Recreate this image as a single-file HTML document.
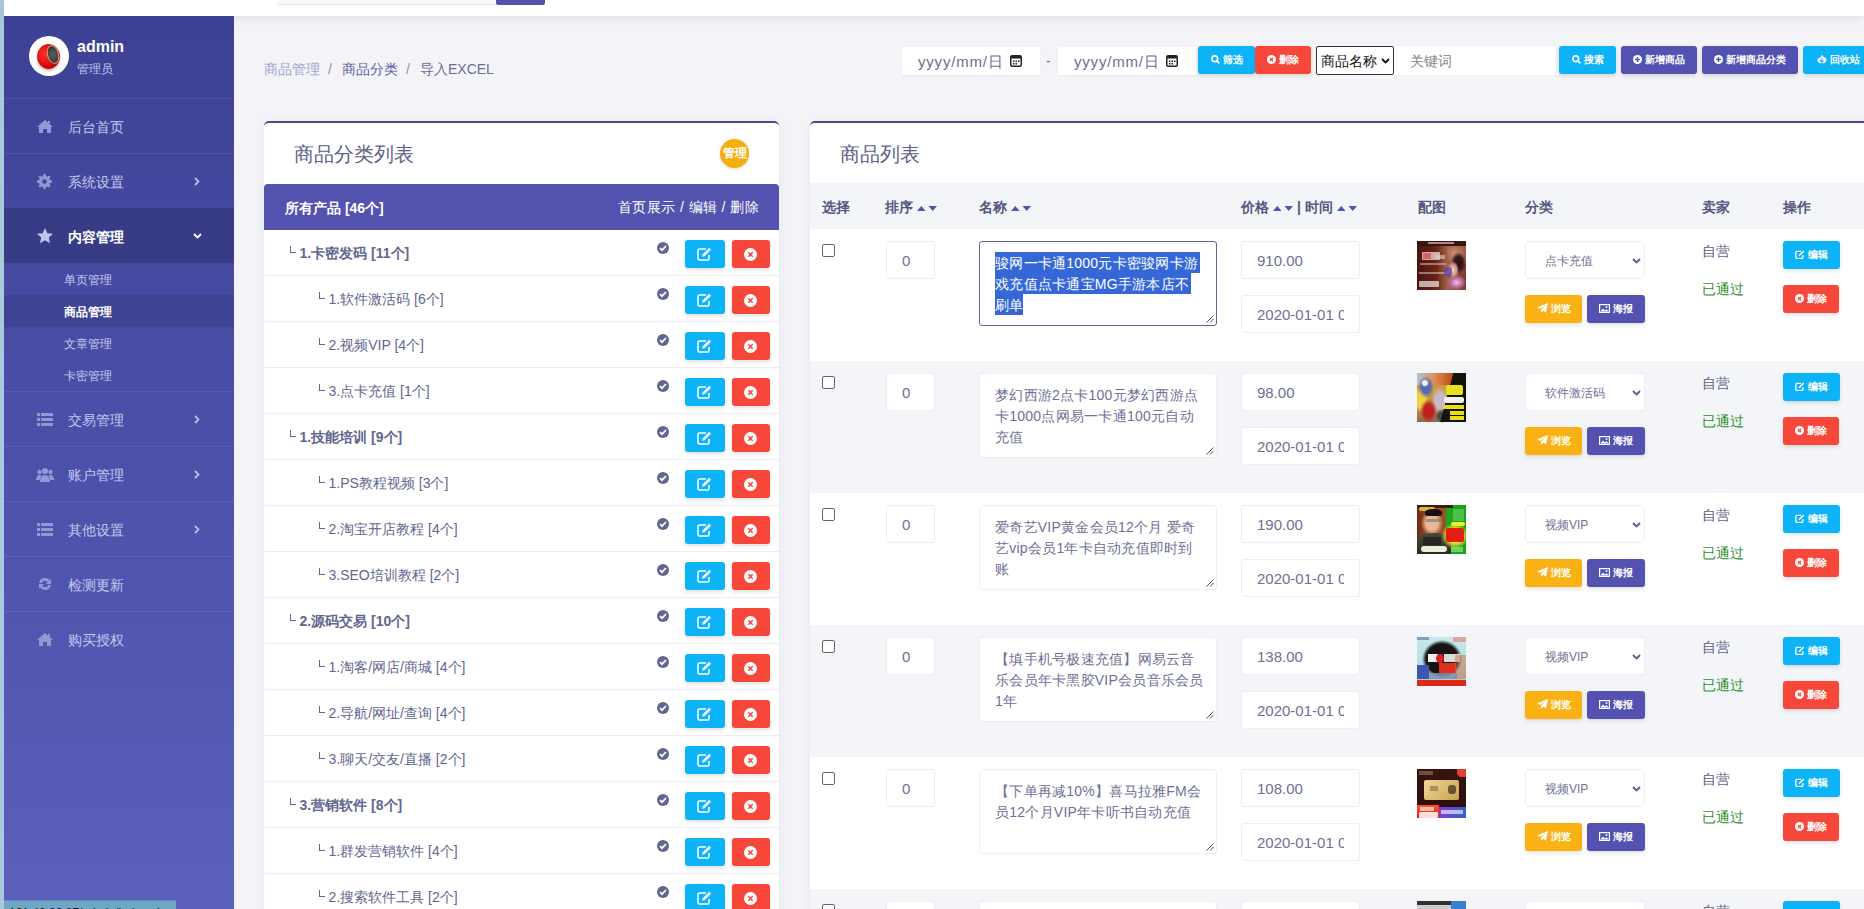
<!DOCTYPE html><html><head><meta charset="utf-8"><style>
*{box-sizing:border-box;margin:0;padding:0}
html,body{width:1864px;height:909px;overflow:hidden}
body{font-family:"Liberation Sans",sans-serif;background:#f4f4f8;position:relative;color:#6b6f96}
.a{position:absolute}
#strip{left:0;top:0;width:4px;height:909px;background:#a9c9dc}
#topbar{left:4px;top:0;width:1860px;height:16px;background:#fff;box-shadow:0 3px 8px rgba(80,80,170,.12)}
#side{left:4px;top:16px;width:230px;height:893px;background:linear-gradient(180deg,#3d4195 0%,#5b60bd 100%)}
.mi{position:absolute;left:0;width:230px;height:55px;border-top:1px solid rgba(255,255,255,.08)}
.mi .t{position:absolute;left:64px;top:1px;line-height:54px;font-size:14px;color:#c5c8ee}
.mi svg{position:absolute}
.sub{position:absolute;left:0;width:230px;height:32px}
.sub .t{position:absolute;left:60px;top:1px;line-height:32px;font-size:12px;color:#c8cbf0}
.crumb{top:60px;font-size:14px;line-height:18px}
.din{top:47px;height:28px;background:#fff;border-radius:2px;box-shadow:0 1px 2px rgba(0,0,0,.04)}
.din .t{position:absolute;left:16px;top:1px;line-height:28px;font-size:15px;color:#6b6f96;letter-spacing:.8px}
.btn{position:absolute;height:28px;border-radius:3px;color:#fff;font-size:10px;font-weight:bold;line-height:28px;text-align:center;white-space:nowrap;box-shadow:0 2px 4px rgba(0,0,0,.12)}
.cy{background:#0db3f7}
.rd{background:#f7463a}
.pu{background:#5352b0}
.or{background:#fab114}
.panel{background:#fff;border-top:2px solid #4a4a8c;border-radius:5px 5px 0 0;box-shadow:0 0 12px rgba(80,80,160,.08)}
.ptitle{position:absolute;font-size:20px;color:#5e6288;line-height:24px}
.crow{position:absolute;left:0;width:515px;height:46px;border-bottom:1px solid #ececf3}
.crow .n{position:absolute;top:0;line-height:46px;font-size:14px;color:#62668f;white-space:nowrap}
.crow .n b{font-weight:bold}
.crow .l{display:inline-block;width:6px;height:7px;border-left:1.7px solid #62668f;border-bottom:1.7px solid #62668f;position:relative;top:-5.5px;margin-left:1.5px;margin-right:4px}
.crow .ck{position:absolute;left:393px;top:12px;width:12px;height:12px}
.crow .eb{position:absolute;left:421px;top:10px;width:40px;height:28px;border-radius:3px;background:#0db3f7;box-shadow:0 2px 4px rgba(0,0,0,.12)}
.crow .xb{position:absolute;left:468px;top:10px;width:38px;height:28px;border-radius:3px;background:#f7463a;box-shadow:0 2px 4px rgba(0,0,0,.12)}
.hd{position:absolute;top:1px;line-height:46px;font-size:14px;font-weight:bold;color:#55597f;white-space:nowrap}
.prow{position:absolute;left:0;width:1054px;height:132px}
.inp{position:absolute;background:#fff;border:1px solid #ededf3;border-radius:3px;font-size:15px;color:#6e7195;padding-left:15px;overflow:hidden;white-space:nowrap}
.img1{background:linear-gradient(90deg,#4a1a12 0%,#7a3222 45%,#a05a40 70%,#6a2a20 100%);overflow:hidden}
.img2,.img3,.img4,.img5,.img6{overflow:hidden}
.ta{position:absolute;background:#fff;border:1px solid #ededf3;border-radius:3px;font-size:14px;line-height:21px;color:#6e7195;padding:11px 0 0 15px;white-space:nowrap;overflow:hidden;letter-spacing:.25px}
</style></head><body>
<div id="strip" class="a"></div>
<div id="topbar" class="a"></div>
<div class="a" style="left:278px;top:0;width:218px;height:5px;background:#f7f6fb;border-bottom:1px solid #ebebf2;box-shadow:0 1px 2px rgba(0,0,0,.04)"></div>
<div class="a" style="left:496px;top:0;width:49px;height:5px;background:#5352ae;border-radius:0 0 2px 2px"></div>
<div id="side" class="a">
<div class="a" style="left:25px;top:20px;width:40px;height:40px;border-radius:50%;background:#fff;overflow:hidden"><div class="a" style="left:8px;top:8px;width:23px;height:25px;border-radius:50%;background:radial-gradient(circle at 35% 40%,#ff3030,#c00 70%,#700);box-shadow:0 2px 2px rgba(0,0,0,.25)"></div><div class="a" style="left:18px;top:9px;width:12px;height:19px;border-radius:50%;background:radial-gradient(circle at 50% 50%,#5a605a,#2a2e2a);border:1px solid #c9a08a;transform:rotate(-15deg)"></div></div>
<div class="a" style="left:73px;top:22px;font-size:16px;font-weight:bold;color:#fff;line-height:18px">admin</div>
<div class="a" style="left:73px;top:45px;font-size:12px;color:#c0c4ee;line-height:16px">管理员</div>
<div class="mi" style="top:82px;"><svg style="left:33px;top:21px" width="16" height="13" viewBox="0 0 16 13"><path d="M8 0 L16 7 L14 7 L14 13 L10 13 L10 9 L6 9 L6 13 L2 13 L2 7 L0 7 Z M11 1 L13 1 L13 4 L11 2.5Z" fill="#9498d2"/></svg><div class="t" style="">后台首页</div></div>
<div class="mi" style="top:137px;"><svg style="left:33px;top:20px" width="15" height="15" viewBox="0 0 16 16"><path fill="#9498d2" d="M6.8 0h2.4l.4 2.2 1.3.6 1.9-1.3 1.7 1.7-1.3 1.9.6 1.3 2.2.4v2.4l-2.2.4-.6 1.3 1.3 1.9-1.7 1.7-1.9-1.3-1.3.6-.4 2.2H6.8l-.4-2.2-1.3-.6-1.9 1.3-1.7-1.7 1.3-1.9-.6-1.3L0 9.2V6.8l2.2-.4.6-1.3-1.3-1.9 1.7-1.7 1.9 1.3 1.3-.6zM8 5.5A2.5 2.5 0 1 0 8 10.5 2.5 2.5 0 1 0 8 5.5z"/></svg><div class="t" style="">系统设置</div><svg style="left:190px;top:23px" width="6" height="9" viewBox="0 0 6 9"><path d="M1 1l3.5 3.5L1 8" stroke="#b9bdec" stroke-width="1.8" fill="none"/></svg></div>
<div class="mi" style="top:192px;background:#383b85;border-top-color:#383b85"><svg style="left:33px;top:19px" width="16" height="16" viewBox="0 0 16 16"><path fill="#c3c6ec" d="M8 0l2.4 5.2 5.6.6-4.2 3.8 1.2 5.6L8 12.3 3 15.2l1.2-5.6L0 5.8l5.6-.6z"/></svg><div class="t" style="color:#fff;font-weight:bold">内容管理</div><svg style="left:189px;top:24px" width="9" height="6" viewBox="0 0 9 6"><path d="M1 1l3.5 3.5L8 1" stroke="#fff" stroke-width="1.8" fill="none"/></svg></div>
<div class="sub" style="top:247px"><div class="t">单页管理</div></div>
<div class="sub" style="top:279px;background:#3f4393"><div class="t" style="color:#fff;font-weight:bold">商品管理</div></div>
<div class="sub" style="top:311px"><div class="t">文章管理</div></div>
<div class="sub" style="top:343px"><div class="t">卡密管理</div></div>
<div class="mi" style="top:375px;"><svg style="left:33px;top:21px" width="16" height="13" viewBox="0 0 16 13"><path fill="#9498d2" d="M0 0h3v3H0zM4 0h12v3H4zM0 5h3v3H0zM4 5h12v3H4zM0 10h3v3H0zM4 10h12v3H4z"/></svg><div class="t" style="">交易管理</div><svg style="left:190px;top:23px" width="6" height="9" viewBox="0 0 6 9"><path d="M1 1l3.5 3.5L1 8" stroke="#b9bdec" stroke-width="1.8" fill="none"/></svg></div>
<div class="mi" style="top:430px;"><svg style="left:32px;top:20px" width="18" height="15" viewBox="0 0 18 15"><circle cx="9" cy="4" r="3" fill="#9498d2"/><circle cx="3.5" cy="5" r="2.2" fill="#9498d2"/><circle cx="14.5" cy="5" r="2.2" fill="#9498d2"/><path fill="#9498d2" d="M4 15c0-4 2-7 5-7s5 3 5 7z M0 13c0-3 1.5-5 3.5-5 1 0 1.5.3 2 .8-1 1.4-1.5 3-1.5 4.2z M18 13c0-3-1.5-5-3.5-5-1 0-1.5.3-2 .8 1 1.4 1.5 3 1.5 4.2z"/></svg><div class="t" style="">账户管理</div><svg style="left:190px;top:23px" width="6" height="9" viewBox="0 0 6 9"><path d="M1 1l3.5 3.5L1 8" stroke="#b9bdec" stroke-width="1.8" fill="none"/></svg></div>
<div class="mi" style="top:485px;"><svg style="left:33px;top:21px" width="16" height="13" viewBox="0 0 16 13"><path fill="#9498d2" d="M0 0h3v3H0zM4 0h12v3H4zM0 5h3v3H0zM4 5h12v3H4zM0 10h3v3H0zM4 10h12v3H4z"/></svg><div class="t" style="">其他设置</div><svg style="left:190px;top:23px" width="6" height="9" viewBox="0 0 6 9"><path d="M1 1l3.5 3.5L1 8" stroke="#b9bdec" stroke-width="1.8" fill="none"/></svg></div>
<div class="mi" style="top:540px;"><svg style="left:34px;top:20px" width="14" height="14" viewBox="0 0 14 14"><path fill="#9498d2" d="M7 1a6 6 0 0 1 4.8 2.4L13 2v5H8l1.8-1.8A3.5 3.5 0 0 0 3.6 6H1.1A6 6 0 0 1 7 1zM1 7h5l-1.8 1.8A3.5 3.5 0 0 0 10.4 8h2.5A6 6 0 0 1 2.2 10.6L1 12z"/></svg><div class="t" style="">检测更新</div></div>
<div class="mi" style="top:595px;"><svg style="left:33px;top:21px" width="16" height="13" viewBox="0 0 16 13"><path d="M8 0 L16 7 L14 7 L14 13 L10 13 L10 9 L6 9 L6 13 L2 13 L2 7 L0 7 Z M11 1 L13 1 L13 4 L11 2.5Z" fill="#9498d2"/></svg><div class="t" style="">购买授权</div></div>
</div>
<div class="a" style="left:4px;top:900px;width:172px;height:9px;background:#6fa6c6;overflow:hidden;border-top:1px solid #5d8fb5"><div class="a" style="left:5px;top:5px;font-size:12px;color:#111;line-height:14px;white-space:nowrap">101.42.80.87/admin/index.php</div></div>
<div class="a crumb" style="left:264px;color:#9ea2cc">商品管理</div>
<div class="a crumb" style="left:328px;color:#8a8eb8">/</div>
<div class="a crumb" style="left:342px;color:#5b5ea6">商品分类</div>
<div class="a crumb" style="left:406px;color:#8a8eb8">/</div>
<div class="a crumb" style="left:420px;color:#6b6f96">导入EXCEL</div>
<div class="a din" style="left:902px;width:138px"><div class="t">yyyy/mm/日</div><svg class="a" style="left:108px;top:8px" width="12" height="12" viewBox="0 0 12 12"><rect x=".75" y=".75" width="10.5" height="10.5" rx="1.5" fill="none" stroke="#222" stroke-width="1.5"/><rect x="1" y="1" width="10" height="2.5" fill="#222"/><rect x="3" y="5.5" width="1.5" height="1.5" fill="#222"/><rect x="5.5" y="5.5" width="1.5" height="1.5" fill="#222"/><rect x="8" y="5.5" width="1.5" height="1.5" fill="#222"/><rect x="3" y="8" width="1.5" height="1.5" fill="#222"/><rect x="5.5" y="8" width="1.5" height="1.5" fill="#222"/></svg></div>
<div class="a" style="left:1046px;top:52px;font-size:14px;line-height:18px;color:#6b6f96">-</div>
<div class="a din" style="left:1058px;width:138px"><div class="t">yyyy/mm/日</div><svg class="a" style="left:108px;top:8px" width="12" height="12" viewBox="0 0 12 12"><rect x=".75" y=".75" width="10.5" height="10.5" rx="1.5" fill="none" stroke="#222" stroke-width="1.5"/><rect x="1" y="1" width="10" height="2.5" fill="#222"/><rect x="3" y="5.5" width="1.5" height="1.5" fill="#222"/><rect x="5.5" y="5.5" width="1.5" height="1.5" fill="#222"/><rect x="8" y="5.5" width="1.5" height="1.5" fill="#222"/><rect x="3" y="8" width="1.5" height="1.5" fill="#222"/><rect x="5.5" y="8" width="1.5" height="1.5" fill="#222"/></svg></div>
<div class="btn cy" style="left:1198px;top:46px;width:57px"><svg width="9" height="9" viewBox="0 0 10 10" style="vertical-align:-1px;margin-right:3px"><circle cx="4.2" cy="4.2" r="3.2" stroke="#fff" stroke-width="1.8" fill="none"/><path d="M6.5 6.5L9.3 9.3" stroke="#fff" stroke-width="2"/></svg>筛选</div>
<div class="btn rd" style="left:1255px;top:46px;width:56px"><svg width="9" height="9" viewBox="0 0 10 10" style="vertical-align:-1px;margin-right:3px"><circle cx="5" cy="5" r="5" fill="#fff"/><path d="M3.2 3.2l3.6 3.6M6.8 3.2l-3.6 3.6" stroke="#f5433b" stroke-width="1.5"/></svg>删除</div>
<div class="a" style="left:1316px;top:46px;width:78px;height:29px;background:#fff;border:1px solid #333;border-radius:2px;font-size:14px;color:#111;line-height:29px;padding-left:4px;white-space:nowrap">商品名称<svg class="a" style="left:64px;top:11px" width="9" height="6" viewBox="0 0 9 6"><path d="M1 1l3.5 3.5L8 1" stroke="#111" stroke-width="1.8" fill="none"/></svg></div>
<div class="a" style="left:1394px;top:46px;width:161px;height:29px;background:#fff;font-size:14px;color:#888;line-height:31px;padding-left:16px">关键词</div>
<div class="btn cy" style="left:1559px;top:46px;width:57px"><svg width="9" height="9" viewBox="0 0 10 10" style="vertical-align:-1px;margin-right:3px"><circle cx="4.2" cy="4.2" r="3.2" stroke="#fff" stroke-width="1.8" fill="none"/><path d="M6.5 6.5L9.3 9.3" stroke="#fff" stroke-width="2"/></svg>搜索</div>
<div class="btn pu" style="left:1621px;top:46px;width:76px"><svg width="9" height="9" viewBox="0 0 10 10" style="vertical-align:-1px;margin-right:3px"><circle cx="5" cy="5" r="5" fill="#fff"/><path d="M5 2.3v5.4M2.3 5h5.4" stroke="#5352b0" stroke-width="1.6"/></svg>新增商品</div>
<div class="btn pu" style="left:1702px;top:46px;width:96px"><svg width="9" height="9" viewBox="0 0 10 10" style="vertical-align:-1px;margin-right:3px"><circle cx="5" cy="5" r="5" fill="#fff"/><path d="M5 2.3v5.4M2.3 5h5.4" stroke="#5352b0" stroke-width="1.6"/></svg>新增商品分类</div>
<div class="btn cy" style="left:1803px;top:46px;width:70px;border-radius:3px 0 0 3px"><svg width="10" height="10" viewBox="0 0 10 10" style="vertical-align:-1px;margin-right:3px"><path d="M5 .5L7 3.8 8.2 3.1 9.6 6.6 7.4 9.3H5.6V7.6H7.2L6.3 6 5.2 6.7 5.8 3.9 3.9 4.9Z M3.3 2.3L4.4 1 2.2 4.7 1 4.1.4 7.2 2.4 9.3H4.6V7.6H2.6L3.6 5.6 4.7 6.3Z" fill="#fff"/></svg>回收站</div>
<div class="a panel" style="left:264px;top:121px;width:515px;height:800px;overflow:hidden">
<div class="ptitle" style="left:30px;top:19px">商品分类列表</div>
<div class="a" style="left:456px;top:16px;width:29px;height:29px;border-radius:50%;background:#f8ad0e;color:#fff;font-size:12px;font-weight:bold;line-height:29px;text-align:center;box-shadow:0 1px 3px rgba(0,0,0,.15)">管理</div>
<div class="a" style="left:0;top:61px;width:515px;height:46px;background:#5352ae;border-radius:4px 4px 0 0"><div class="hd" style="left:21px;color:#fff">所有产品 [46个]</div><div class="a" style="right:20px;top:0;line-height:46px;font-size:14px;color:#fff;white-space:nowrap;letter-spacing:.4px">首页展示 / 编辑 / 删除</div></div>
<div class="crow" style="top:107px"><div class="n" style="left:24px"><span class="l"></span><b>1.卡密发码 [11个]</b></div><svg class="ck" viewBox="0 0 12 12"><circle cx="6" cy="6" r="6" fill="#62668f"/><path d="M3 6.2l2 2 4-4.2" stroke="#fff" stroke-width="1.8" fill="none"/></svg><div class="eb"><svg class="a" style="left:12px;top:7px" width="15" height="14" viewBox="0 0 15 14"><path d="M9 2H2.5A1.5 1.5 0 0 0 1 3.5v8A1.5 1.5 0 0 0 2.5 13h8a1.5 1.5 0 0 0 1.5-1.5V8" stroke="#fff" stroke-width="1.6" fill="none"/><path d="M12.2.8l1.9 1.9-6.4 6.4-2.6.7.7-2.6z" fill="#fff"/></svg></div><div class="xb"><svg class="a" style="left:12px;top:7.5px" width="13" height="13" viewBox="0 0 13 13"><circle cx="6.5" cy="6.5" r="6.5" fill="#fff"/><path d="M4.3 4.3l4.4 4.4M8.7 4.3l-4.4 4.4" stroke="#f5463a" stroke-width="1.6"/></svg></div></div>
<div class="crow" style="top:153px"><div class="n" style="left:53px"><span class="l"></span>1.软件激活码 [6个]</div><svg class="ck" viewBox="0 0 12 12"><circle cx="6" cy="6" r="6" fill="#62668f"/><path d="M3 6.2l2 2 4-4.2" stroke="#fff" stroke-width="1.8" fill="none"/></svg><div class="eb"><svg class="a" style="left:12px;top:7px" width="15" height="14" viewBox="0 0 15 14"><path d="M9 2H2.5A1.5 1.5 0 0 0 1 3.5v8A1.5 1.5 0 0 0 2.5 13h8a1.5 1.5 0 0 0 1.5-1.5V8" stroke="#fff" stroke-width="1.6" fill="none"/><path d="M12.2.8l1.9 1.9-6.4 6.4-2.6.7.7-2.6z" fill="#fff"/></svg></div><div class="xb"><svg class="a" style="left:12px;top:7.5px" width="13" height="13" viewBox="0 0 13 13"><circle cx="6.5" cy="6.5" r="6.5" fill="#fff"/><path d="M4.3 4.3l4.4 4.4M8.7 4.3l-4.4 4.4" stroke="#f5463a" stroke-width="1.6"/></svg></div></div>
<div class="crow" style="top:199px"><div class="n" style="left:53px"><span class="l"></span>2.视频VIP [4个]</div><svg class="ck" viewBox="0 0 12 12"><circle cx="6" cy="6" r="6" fill="#62668f"/><path d="M3 6.2l2 2 4-4.2" stroke="#fff" stroke-width="1.8" fill="none"/></svg><div class="eb"><svg class="a" style="left:12px;top:7px" width="15" height="14" viewBox="0 0 15 14"><path d="M9 2H2.5A1.5 1.5 0 0 0 1 3.5v8A1.5 1.5 0 0 0 2.5 13h8a1.5 1.5 0 0 0 1.5-1.5V8" stroke="#fff" stroke-width="1.6" fill="none"/><path d="M12.2.8l1.9 1.9-6.4 6.4-2.6.7.7-2.6z" fill="#fff"/></svg></div><div class="xb"><svg class="a" style="left:12px;top:7.5px" width="13" height="13" viewBox="0 0 13 13"><circle cx="6.5" cy="6.5" r="6.5" fill="#fff"/><path d="M4.3 4.3l4.4 4.4M8.7 4.3l-4.4 4.4" stroke="#f5463a" stroke-width="1.6"/></svg></div></div>
<div class="crow" style="top:245px"><div class="n" style="left:53px"><span class="l"></span>3.点卡充值 [1个]</div><svg class="ck" viewBox="0 0 12 12"><circle cx="6" cy="6" r="6" fill="#62668f"/><path d="M3 6.2l2 2 4-4.2" stroke="#fff" stroke-width="1.8" fill="none"/></svg><div class="eb"><svg class="a" style="left:12px;top:7px" width="15" height="14" viewBox="0 0 15 14"><path d="M9 2H2.5A1.5 1.5 0 0 0 1 3.5v8A1.5 1.5 0 0 0 2.5 13h8a1.5 1.5 0 0 0 1.5-1.5V8" stroke="#fff" stroke-width="1.6" fill="none"/><path d="M12.2.8l1.9 1.9-6.4 6.4-2.6.7.7-2.6z" fill="#fff"/></svg></div><div class="xb"><svg class="a" style="left:12px;top:7.5px" width="13" height="13" viewBox="0 0 13 13"><circle cx="6.5" cy="6.5" r="6.5" fill="#fff"/><path d="M4.3 4.3l4.4 4.4M8.7 4.3l-4.4 4.4" stroke="#f5463a" stroke-width="1.6"/></svg></div></div>
<div class="crow" style="top:291px"><div class="n" style="left:24px"><span class="l"></span><b>1.技能培训 [9个]</b></div><svg class="ck" viewBox="0 0 12 12"><circle cx="6" cy="6" r="6" fill="#62668f"/><path d="M3 6.2l2 2 4-4.2" stroke="#fff" stroke-width="1.8" fill="none"/></svg><div class="eb"><svg class="a" style="left:12px;top:7px" width="15" height="14" viewBox="0 0 15 14"><path d="M9 2H2.5A1.5 1.5 0 0 0 1 3.5v8A1.5 1.5 0 0 0 2.5 13h8a1.5 1.5 0 0 0 1.5-1.5V8" stroke="#fff" stroke-width="1.6" fill="none"/><path d="M12.2.8l1.9 1.9-6.4 6.4-2.6.7.7-2.6z" fill="#fff"/></svg></div><div class="xb"><svg class="a" style="left:12px;top:7.5px" width="13" height="13" viewBox="0 0 13 13"><circle cx="6.5" cy="6.5" r="6.5" fill="#fff"/><path d="M4.3 4.3l4.4 4.4M8.7 4.3l-4.4 4.4" stroke="#f5463a" stroke-width="1.6"/></svg></div></div>
<div class="crow" style="top:337px"><div class="n" style="left:53px"><span class="l"></span>1.PS教程视频 [3个]</div><svg class="ck" viewBox="0 0 12 12"><circle cx="6" cy="6" r="6" fill="#62668f"/><path d="M3 6.2l2 2 4-4.2" stroke="#fff" stroke-width="1.8" fill="none"/></svg><div class="eb"><svg class="a" style="left:12px;top:7px" width="15" height="14" viewBox="0 0 15 14"><path d="M9 2H2.5A1.5 1.5 0 0 0 1 3.5v8A1.5 1.5 0 0 0 2.5 13h8a1.5 1.5 0 0 0 1.5-1.5V8" stroke="#fff" stroke-width="1.6" fill="none"/><path d="M12.2.8l1.9 1.9-6.4 6.4-2.6.7.7-2.6z" fill="#fff"/></svg></div><div class="xb"><svg class="a" style="left:12px;top:7.5px" width="13" height="13" viewBox="0 0 13 13"><circle cx="6.5" cy="6.5" r="6.5" fill="#fff"/><path d="M4.3 4.3l4.4 4.4M8.7 4.3l-4.4 4.4" stroke="#f5463a" stroke-width="1.6"/></svg></div></div>
<div class="crow" style="top:383px"><div class="n" style="left:53px"><span class="l"></span>2.淘宝开店教程 [4个]</div><svg class="ck" viewBox="0 0 12 12"><circle cx="6" cy="6" r="6" fill="#62668f"/><path d="M3 6.2l2 2 4-4.2" stroke="#fff" stroke-width="1.8" fill="none"/></svg><div class="eb"><svg class="a" style="left:12px;top:7px" width="15" height="14" viewBox="0 0 15 14"><path d="M9 2H2.5A1.5 1.5 0 0 0 1 3.5v8A1.5 1.5 0 0 0 2.5 13h8a1.5 1.5 0 0 0 1.5-1.5V8" stroke="#fff" stroke-width="1.6" fill="none"/><path d="M12.2.8l1.9 1.9-6.4 6.4-2.6.7.7-2.6z" fill="#fff"/></svg></div><div class="xb"><svg class="a" style="left:12px;top:7.5px" width="13" height="13" viewBox="0 0 13 13"><circle cx="6.5" cy="6.5" r="6.5" fill="#fff"/><path d="M4.3 4.3l4.4 4.4M8.7 4.3l-4.4 4.4" stroke="#f5463a" stroke-width="1.6"/></svg></div></div>
<div class="crow" style="top:429px"><div class="n" style="left:53px"><span class="l"></span>3.SEO培训教程 [2个]</div><svg class="ck" viewBox="0 0 12 12"><circle cx="6" cy="6" r="6" fill="#62668f"/><path d="M3 6.2l2 2 4-4.2" stroke="#fff" stroke-width="1.8" fill="none"/></svg><div class="eb"><svg class="a" style="left:12px;top:7px" width="15" height="14" viewBox="0 0 15 14"><path d="M9 2H2.5A1.5 1.5 0 0 0 1 3.5v8A1.5 1.5 0 0 0 2.5 13h8a1.5 1.5 0 0 0 1.5-1.5V8" stroke="#fff" stroke-width="1.6" fill="none"/><path d="M12.2.8l1.9 1.9-6.4 6.4-2.6.7.7-2.6z" fill="#fff"/></svg></div><div class="xb"><svg class="a" style="left:12px;top:7.5px" width="13" height="13" viewBox="0 0 13 13"><circle cx="6.5" cy="6.5" r="6.5" fill="#fff"/><path d="M4.3 4.3l4.4 4.4M8.7 4.3l-4.4 4.4" stroke="#f5463a" stroke-width="1.6"/></svg></div></div>
<div class="crow" style="top:475px"><div class="n" style="left:24px"><span class="l"></span><b>2.源码交易 [10个]</b></div><svg class="ck" viewBox="0 0 12 12"><circle cx="6" cy="6" r="6" fill="#62668f"/><path d="M3 6.2l2 2 4-4.2" stroke="#fff" stroke-width="1.8" fill="none"/></svg><div class="eb"><svg class="a" style="left:12px;top:7px" width="15" height="14" viewBox="0 0 15 14"><path d="M9 2H2.5A1.5 1.5 0 0 0 1 3.5v8A1.5 1.5 0 0 0 2.5 13h8a1.5 1.5 0 0 0 1.5-1.5V8" stroke="#fff" stroke-width="1.6" fill="none"/><path d="M12.2.8l1.9 1.9-6.4 6.4-2.6.7.7-2.6z" fill="#fff"/></svg></div><div class="xb"><svg class="a" style="left:12px;top:7.5px" width="13" height="13" viewBox="0 0 13 13"><circle cx="6.5" cy="6.5" r="6.5" fill="#fff"/><path d="M4.3 4.3l4.4 4.4M8.7 4.3l-4.4 4.4" stroke="#f5463a" stroke-width="1.6"/></svg></div></div>
<div class="crow" style="top:521px"><div class="n" style="left:53px"><span class="l"></span>1.淘客/网店/商城 [4个]</div><svg class="ck" viewBox="0 0 12 12"><circle cx="6" cy="6" r="6" fill="#62668f"/><path d="M3 6.2l2 2 4-4.2" stroke="#fff" stroke-width="1.8" fill="none"/></svg><div class="eb"><svg class="a" style="left:12px;top:7px" width="15" height="14" viewBox="0 0 15 14"><path d="M9 2H2.5A1.5 1.5 0 0 0 1 3.5v8A1.5 1.5 0 0 0 2.5 13h8a1.5 1.5 0 0 0 1.5-1.5V8" stroke="#fff" stroke-width="1.6" fill="none"/><path d="M12.2.8l1.9 1.9-6.4 6.4-2.6.7.7-2.6z" fill="#fff"/></svg></div><div class="xb"><svg class="a" style="left:12px;top:7.5px" width="13" height="13" viewBox="0 0 13 13"><circle cx="6.5" cy="6.5" r="6.5" fill="#fff"/><path d="M4.3 4.3l4.4 4.4M8.7 4.3l-4.4 4.4" stroke="#f5463a" stroke-width="1.6"/></svg></div></div>
<div class="crow" style="top:567px"><div class="n" style="left:53px"><span class="l"></span>2.导航/网址/查询 [4个]</div><svg class="ck" viewBox="0 0 12 12"><circle cx="6" cy="6" r="6" fill="#62668f"/><path d="M3 6.2l2 2 4-4.2" stroke="#fff" stroke-width="1.8" fill="none"/></svg><div class="eb"><svg class="a" style="left:12px;top:7px" width="15" height="14" viewBox="0 0 15 14"><path d="M9 2H2.5A1.5 1.5 0 0 0 1 3.5v8A1.5 1.5 0 0 0 2.5 13h8a1.5 1.5 0 0 0 1.5-1.5V8" stroke="#fff" stroke-width="1.6" fill="none"/><path d="M12.2.8l1.9 1.9-6.4 6.4-2.6.7.7-2.6z" fill="#fff"/></svg></div><div class="xb"><svg class="a" style="left:12px;top:7.5px" width="13" height="13" viewBox="0 0 13 13"><circle cx="6.5" cy="6.5" r="6.5" fill="#fff"/><path d="M4.3 4.3l4.4 4.4M8.7 4.3l-4.4 4.4" stroke="#f5463a" stroke-width="1.6"/></svg></div></div>
<div class="crow" style="top:613px"><div class="n" style="left:53px"><span class="l"></span>3.聊天/交友/直播 [2个]</div><svg class="ck" viewBox="0 0 12 12"><circle cx="6" cy="6" r="6" fill="#62668f"/><path d="M3 6.2l2 2 4-4.2" stroke="#fff" stroke-width="1.8" fill="none"/></svg><div class="eb"><svg class="a" style="left:12px;top:7px" width="15" height="14" viewBox="0 0 15 14"><path d="M9 2H2.5A1.5 1.5 0 0 0 1 3.5v8A1.5 1.5 0 0 0 2.5 13h8a1.5 1.5 0 0 0 1.5-1.5V8" stroke="#fff" stroke-width="1.6" fill="none"/><path d="M12.2.8l1.9 1.9-6.4 6.4-2.6.7.7-2.6z" fill="#fff"/></svg></div><div class="xb"><svg class="a" style="left:12px;top:7.5px" width="13" height="13" viewBox="0 0 13 13"><circle cx="6.5" cy="6.5" r="6.5" fill="#fff"/><path d="M4.3 4.3l4.4 4.4M8.7 4.3l-4.4 4.4" stroke="#f5463a" stroke-width="1.6"/></svg></div></div>
<div class="crow" style="top:659px"><div class="n" style="left:24px"><span class="l"></span><b>3.营销软件 [8个]</b></div><svg class="ck" viewBox="0 0 12 12"><circle cx="6" cy="6" r="6" fill="#62668f"/><path d="M3 6.2l2 2 4-4.2" stroke="#fff" stroke-width="1.8" fill="none"/></svg><div class="eb"><svg class="a" style="left:12px;top:7px" width="15" height="14" viewBox="0 0 15 14"><path d="M9 2H2.5A1.5 1.5 0 0 0 1 3.5v8A1.5 1.5 0 0 0 2.5 13h8a1.5 1.5 0 0 0 1.5-1.5V8" stroke="#fff" stroke-width="1.6" fill="none"/><path d="M12.2.8l1.9 1.9-6.4 6.4-2.6.7.7-2.6z" fill="#fff"/></svg></div><div class="xb"><svg class="a" style="left:12px;top:7.5px" width="13" height="13" viewBox="0 0 13 13"><circle cx="6.5" cy="6.5" r="6.5" fill="#fff"/><path d="M4.3 4.3l4.4 4.4M8.7 4.3l-4.4 4.4" stroke="#f5463a" stroke-width="1.6"/></svg></div></div>
<div class="crow" style="top:705px"><div class="n" style="left:53px"><span class="l"></span>1.群发营销软件 [4个]</div><svg class="ck" viewBox="0 0 12 12"><circle cx="6" cy="6" r="6" fill="#62668f"/><path d="M3 6.2l2 2 4-4.2" stroke="#fff" stroke-width="1.8" fill="none"/></svg><div class="eb"><svg class="a" style="left:12px;top:7px" width="15" height="14" viewBox="0 0 15 14"><path d="M9 2H2.5A1.5 1.5 0 0 0 1 3.5v8A1.5 1.5 0 0 0 2.5 13h8a1.5 1.5 0 0 0 1.5-1.5V8" stroke="#fff" stroke-width="1.6" fill="none"/><path d="M12.2.8l1.9 1.9-6.4 6.4-2.6.7.7-2.6z" fill="#fff"/></svg></div><div class="xb"><svg class="a" style="left:12px;top:7.5px" width="13" height="13" viewBox="0 0 13 13"><circle cx="6.5" cy="6.5" r="6.5" fill="#fff"/><path d="M4.3 4.3l4.4 4.4M8.7 4.3l-4.4 4.4" stroke="#f5463a" stroke-width="1.6"/></svg></div></div>
<div class="crow" style="top:751px"><div class="n" style="left:53px"><span class="l"></span>2.搜索软件工具 [2个]</div><svg class="ck" viewBox="0 0 12 12"><circle cx="6" cy="6" r="6" fill="#62668f"/><path d="M3 6.2l2 2 4-4.2" stroke="#fff" stroke-width="1.8" fill="none"/></svg><div class="eb"><svg class="a" style="left:12px;top:7px" width="15" height="14" viewBox="0 0 15 14"><path d="M9 2H2.5A1.5 1.5 0 0 0 1 3.5v8A1.5 1.5 0 0 0 2.5 13h8a1.5 1.5 0 0 0 1.5-1.5V8" stroke="#fff" stroke-width="1.6" fill="none"/><path d="M12.2.8l1.9 1.9-6.4 6.4-2.6.7.7-2.6z" fill="#fff"/></svg></div><div class="xb"><svg class="a" style="left:12px;top:7.5px" width="13" height="13" viewBox="0 0 13 13"><circle cx="6.5" cy="6.5" r="6.5" fill="#fff"/><path d="M4.3 4.3l4.4 4.4M8.7 4.3l-4.4 4.4" stroke="#f5463a" stroke-width="1.6"/></svg></div></div>
<div class="crow" style="top:797px"><div class="n" style="left:53px"><span class="l"></span>3.其他 [2个]</div><svg class="ck" viewBox="0 0 12 12"><circle cx="6" cy="6" r="6" fill="#62668f"/><path d="M3 6.2l2 2 4-4.2" stroke="#fff" stroke-width="1.8" fill="none"/></svg><div class="eb"><svg class="a" style="left:12px;top:7px" width="15" height="14" viewBox="0 0 15 14"><path d="M9 2H2.5A1.5 1.5 0 0 0 1 3.5v8A1.5 1.5 0 0 0 2.5 13h8a1.5 1.5 0 0 0 1.5-1.5V8" stroke="#fff" stroke-width="1.6" fill="none"/><path d="M12.2.8l1.9 1.9-6.4 6.4-2.6.7.7-2.6z" fill="#fff"/></svg></div><div class="xb"><svg class="a" style="left:12px;top:7.5px" width="13" height="13" viewBox="0 0 13 13"><circle cx="6.5" cy="6.5" r="6.5" fill="#fff"/><path d="M4.3 4.3l4.4 4.4M8.7 4.3l-4.4 4.4" stroke="#f5463a" stroke-width="1.6"/></svg></div></div>
</div>
<div class="a panel" style="left:810px;top:121px;width:1070px;height:800px;overflow:hidden;border-radius:5px 0 0 0">
<div class="ptitle" style="left:30px;top:19px">商品列表</div>
<div class="a" style="left:0;top:60px;width:1070px;height:46px;background:#f4f5f9">
<div class="hd" style="left:12px">选择</div>
<div class="hd" style="left:75px">排序<svg width="20" height="5" viewBox="0 0 20 5" style="margin-left:4px;vertical-align:1px"><path d="M0 5L4.3 0 8.6 5z M11.5 0h8.5l-4.25 5z" fill="#5352ae"/></svg></div>
<div class="hd" style="left:169px">名称<svg width="20" height="5" viewBox="0 0 20 5" style="margin-left:4px;vertical-align:1px"><path d="M0 5L4.3 0 8.6 5z M11.5 0h8.5l-4.25 5z" fill="#5352ae"/></svg></div>
<div class="hd" style="left:431px">价格<svg width="20" height="5" viewBox="0 0 20 5" style="margin-left:4px;vertical-align:1px"><path d="M0 5L4.3 0 8.6 5z M11.5 0h8.5l-4.25 5z" fill="#5352ae"/></svg> | 时间<svg width="20" height="5" viewBox="0 0 20 5" style="margin-left:4px;vertical-align:1px"><path d="M0 5L4.3 0 8.6 5z M11.5 0h8.5l-4.25 5z" fill="#5352ae"/></svg></div>
<div class="hd" style="left:608px">配图</div>
<div class="hd" style="left:715px">分类</div>
<div class="hd" style="left:892px">卖家</div>
<div class="hd" style="left:973px">操作</div>
</div>
<div class="prow" style="top:106px;background:#fff">
<div class="a" style="left:12px;top:15px;width:13px;height:13px;border:1px solid #666;border-radius:2px;background:#fff"></div>
<div class="inp" style="left:76px;top:12px;width:49px;height:38px;line-height:38px">0</div>
<div class="ta" style="left:169px;top:12px;width:238px;height:85px;border-color:#62629a;color:#fff"><div class="a" style="left:15px;top:10px;width:205px;height:21px;background:#3568d6;"></div><div class="a" style="left:15px;top:31px;width:196px;height:21px;background:#3568d6;"></div><div class="a" style="left:15px;top:52px;width:28px;height:21px;background:#3568d6;"></div><div style="position:relative">骏网一卡通1000元卡密骏网卡游<br>戏充值点卡通宝MG手游本店不<br>刷单</div><svg class="a" style="right:2px;bottom:2px" width="9" height="9" viewBox="0 0 9 9"><path d="M8.5 1.5L1.5 8.5M8.5 5L5 8.5" stroke="#555" stroke-width="1"/></svg></div>
<div class="inp" style="left:431px;top:12px;width:119px;height:38px;line-height:38px">910.00</div>
<div class="inp" style="left:431px;top:66px;width:119px;height:38px;line-height:38px"><div class="a" style="left:15px;top:0;width:87px;overflow:hidden">2020-01-01 0</div></div>
<div class="a" style="left:607px;top:12px;width:50px;height:50px;overflow:hidden"><div class="a" style="left:0;top:0;width:50px;height:50px;filter:blur(.5px)"><div class="a" style="left:0px;top:0px;width:49px;height:49px;background:linear-gradient(90deg,#4a140e 0%,#6a2416 40%,#a0644a 62%,#7a3a2a 100%);"></div><div class="a" style="left:0px;top:0px;width:49px;height:5px;background:#3a1410;"></div><div class="a" style="left:11px;top:1px;width:26px;height:2px;background:#c8a8a0;opacity:.8"></div><div class="a" style="left:30px;top:5px;width:19px;height:18px;background:radial-gradient(ellipse at 40% 40%,#c89078,#9a5a40 70%);"></div><div class="a" style="left:5px;top:11px;width:18px;height:8px;background:#f0e0e0;opacity:.75;border-radius:1px"></div><div class="a" style="left:6px;top:12px;width:8px;height:6px;background:#e03030;opacity:.6"></div><div class="a" style="left:18px;top:14px;width:10px;height:4px;background:#e8d0c8;opacity:.6"></div><div class="a" style="left:3px;top:22px;width:26px;height:2px;background:#d8c0b8;opacity:.55"></div><div class="a" style="left:2px;top:31px;width:30px;height:2px;background:#f0e8e8;opacity:.45"></div><div class="a" style="left:34px;top:11px;width:15px;height:22px;background:radial-gradient(closest-side,#2a0e14,#3a1a20 60%,rgba(90,40,40,0) 100%);"></div><div class="a" style="left:30px;top:20px;width:12px;height:18px;background:radial-gradient(closest-side,#f0d0c8,#d0988a 60%,rgba(200,140,130,0) 100%);"></div><div class="a" style="left:27px;top:26px;width:8px;height:10px;background:#6a40a0;opacity:.75;border-radius:40%"></div><div class="a" style="left:30px;top:34px;width:19px;height:15px;background:radial-gradient(closest-side,#f0c0e0,#c070a8 55%,rgba(150,70,100,0) 100%);"></div><div class="a" style="left:2px;top:40px;width:20px;height:6px;background:#f0f0f0;opacity:.7;border-radius:1px"></div></div></div>
<div class="inp" style="left:715px;top:12px;width:120px;height:38px;line-height:39px;font-size:12px;padding-left:19px">点卡充值<svg class="a" style="left:106px;top:16px" width="9" height="6" viewBox="0 0 9 6"><path d="M1 1l3.5 3.5L8 1" stroke="#5a5e8c" stroke-width="1.8" fill="none"/></svg></div>
<div class="btn or" style="left:715px;top:66px;width:57px"><svg width="11" height="10" viewBox="0 0 11 10" style="vertical-align:-1px;margin-right:3px"><path d="M11 0L0 4.5l3 1.3L9 1.5 4 6.3V10l2-2.3 3 1.5z" fill="#fff"/></svg>浏览</div>
<div class="btn pu" style="left:777px;top:66px;width:58px"><svg width="11" height="9" viewBox="0 0 11 9" style="vertical-align:-1px;margin-right:3px"><rect x=".6" y=".6" width="9.8" height="7.8" stroke="#fff" stroke-width="1.2" fill="none"/><path d="M1.5 7.5l2.5-3 2 2 1.5-1.5 2 2.5z" fill="#fff"/><circle cx="7.5" cy="3" r="1" fill="#fff"/></svg>海报</div>
<div class="a" style="left:892px;top:12px;font-size:14px;line-height:20px;color:#5e6288">自营</div>
<div class="a" style="left:892px;top:50px;font-size:14px;line-height:20px;color:#2d8f2d">已通过</div>
<div class="btn cy" style="left:973px;top:12px;width:57px"><svg width="10" height="9" viewBox="0 0 15 14" style="vertical-align:-1px;margin-right:3px"><path d="M9 2H2.5A1.5 1.5 0 0 0 1 3.5v8A1.5 1.5 0 0 0 2.5 13h8a1.5 1.5 0 0 0 1.5-1.5V8" stroke="#fff" stroke-width="2" fill="none"/><path d="M12.2.8l1.9 1.9-6.4 6.4-2.6.7.7-2.6z" fill="#fff"/></svg>编辑</div>
<div class="btn rd" style="left:973px;top:56px;width:56px"><svg width="9" height="9" viewBox="0 0 10 10" style="vertical-align:-1px;margin-right:3px"><circle cx="5" cy="5" r="5" fill="#fff"/><path d="M3.2 3.2l3.6 3.6M6.8 3.2l-3.6 3.6" stroke="#f5433b" stroke-width="1.5"/></svg>删除</div>
</div>
<div class="prow" style="top:238px;background:#f4f5f9">
<div class="a" style="left:12px;top:15px;width:13px;height:13px;border:1px solid #666;border-radius:2px;background:#fff"></div>
<div class="inp" style="left:76px;top:12px;width:49px;height:38px;line-height:38px">0</div>
<div class="ta" style="left:169px;top:12px;width:238px;height:85px">梦幻西游2点卡100元梦幻西游点<br>卡1000点网易一卡通100元自动<br>充值<svg class="a" style="right:2px;bottom:2px" width="9" height="9" viewBox="0 0 9 9"><path d="M8.5 1.5L1.5 8.5M8.5 5L5 8.5" stroke="#555" stroke-width="1"/></svg></div>
<div class="inp" style="left:431px;top:12px;width:119px;height:38px;line-height:38px">98.00</div>
<div class="inp" style="left:431px;top:66px;width:119px;height:38px;line-height:38px"><div class="a" style="left:15px;top:0;width:87px;overflow:hidden">2020-01-01 0</div></div>
<div class="a" style="left:607px;top:12px;width:50px;height:50px;overflow:hidden"><div class="a" style="left:0;top:0;width:50px;height:50px;filter:blur(.5px)"><div class="a" style="left:0px;top:0px;width:49px;height:49px;background:linear-gradient(180deg,#d88840 0%,#c8a040 35%,#b89048 70%,#8a7050 100%);"></div><div class="a" style="left:0px;top:0px;width:49px;height:12px;background:linear-gradient(90deg,#a8c8d0 0%,#e09050 35%,#c05020 70%,#602010 100%);"></div><div class="a" style="left:-4px;top:14px;width:16px;height:26px;background:radial-gradient(closest-side,#f0d040 55%,rgba(0,0,0,0) 100%);"></div><div class="a" style="left:1px;top:3px;width:16px;height:22px;background:radial-gradient(closest-side,#5868b8 55%,rgba(0,0,0,0) 100%);"></div><div class="a" style="left:4px;top:6px;width:8px;height:8px;background:radial-gradient(closest-side,#f0f0f0 55%,rgba(0,0,0,0) 100%);"></div><div class="a" style="left:14px;top:14px;width:18px;height:28px;background:radial-gradient(closest-side,#c8b8c8 55%,rgba(0,0,0,0) 100%);"></div><div class="a" style="left:3px;top:26px;width:17px;height:24px;background:radial-gradient(closest-side,#c02020 55%,rgba(0,0,0,0) 100%);"></div><div class="a" style="left:18px;top:36px;width:14px;height:14px;background:radial-gradient(closest-side,#504848 55%,rgba(0,0,0,0) 100%);"></div><div class="a" style="left:0px;top:0px;width:49px;height:49px;background:linear-gradient(105deg,rgba(0,0,0,0) 0%,rgba(0,0,0,0) 58%,#15150c 59%,#101008 100%);"></div><div class="a" style="left:29px;top:12px;width:17px;height:10px;background:#e8e020;border-radius:2px"></div><div class="a" style="left:27px;top:24px;width:20px;height:6px;background:#f0f0f0;border-radius:2px"></div><div class="a" style="left:26px;top:32px;width:21px;height:4px;background:#e8e010;"></div><div class="a" style="left:33px;top:38px;width:14px;height:4px;background:#e8e010;"></div><div class="a" style="left:33px;top:43px;width:14px;height:4px;background:#e8e010;"></div></div></div>
<div class="inp" style="left:715px;top:12px;width:120px;height:38px;line-height:39px;font-size:12px;padding-left:19px">软件激活码<svg class="a" style="left:106px;top:16px" width="9" height="6" viewBox="0 0 9 6"><path d="M1 1l3.5 3.5L8 1" stroke="#5a5e8c" stroke-width="1.8" fill="none"/></svg></div>
<div class="btn or" style="left:715px;top:66px;width:57px"><svg width="11" height="10" viewBox="0 0 11 10" style="vertical-align:-1px;margin-right:3px"><path d="M11 0L0 4.5l3 1.3L9 1.5 4 6.3V10l2-2.3 3 1.5z" fill="#fff"/></svg>浏览</div>
<div class="btn pu" style="left:777px;top:66px;width:58px"><svg width="11" height="9" viewBox="0 0 11 9" style="vertical-align:-1px;margin-right:3px"><rect x=".6" y=".6" width="9.8" height="7.8" stroke="#fff" stroke-width="1.2" fill="none"/><path d="M1.5 7.5l2.5-3 2 2 1.5-1.5 2 2.5z" fill="#fff"/><circle cx="7.5" cy="3" r="1" fill="#fff"/></svg>海报</div>
<div class="a" style="left:892px;top:12px;font-size:14px;line-height:20px;color:#5e6288">自营</div>
<div class="a" style="left:892px;top:50px;font-size:14px;line-height:20px;color:#2d8f2d">已通过</div>
<div class="btn cy" style="left:973px;top:12px;width:57px"><svg width="10" height="9" viewBox="0 0 15 14" style="vertical-align:-1px;margin-right:3px"><path d="M9 2H2.5A1.5 1.5 0 0 0 1 3.5v8A1.5 1.5 0 0 0 2.5 13h8a1.5 1.5 0 0 0 1.5-1.5V8" stroke="#fff" stroke-width="2" fill="none"/><path d="M12.2.8l1.9 1.9-6.4 6.4-2.6.7.7-2.6z" fill="#fff"/></svg>编辑</div>
<div class="btn rd" style="left:973px;top:56px;width:56px"><svg width="9" height="9" viewBox="0 0 10 10" style="vertical-align:-1px;margin-right:3px"><circle cx="5" cy="5" r="5" fill="#fff"/><path d="M3.2 3.2l3.6 3.6M6.8 3.2l-3.6 3.6" stroke="#f5433b" stroke-width="1.5"/></svg>删除</div>
</div>
<div class="prow" style="top:370px;background:#fff">
<div class="a" style="left:12px;top:15px;width:13px;height:13px;border:1px solid #666;border-radius:2px;background:#fff"></div>
<div class="inp" style="left:76px;top:12px;width:49px;height:38px;line-height:38px">0</div>
<div class="ta" style="left:169px;top:12px;width:238px;height:85px">爱奇艺VIP黄金会员12个月 爱奇<br>艺vip会员1年卡自动充值即时到<br>账<svg class="a" style="right:2px;bottom:2px" width="9" height="9" viewBox="0 0 9 9"><path d="M8.5 1.5L1.5 8.5M8.5 5L5 8.5" stroke="#555" stroke-width="1"/></svg></div>
<div class="inp" style="left:431px;top:12px;width:119px;height:38px;line-height:38px">190.00</div>
<div class="inp" style="left:431px;top:66px;width:119px;height:38px;line-height:38px"><div class="a" style="left:15px;top:0;width:87px;overflow:hidden">2020-01-01 0</div></div>
<div class="a" style="left:607px;top:12px;width:50px;height:50px;overflow:hidden"><div class="a" style="left:0;top:0;width:50px;height:50px;filter:blur(.5px)"><div class="a" style="left:0px;top:0px;width:49px;height:49px;background:linear-gradient(90deg,#6a2a18 0%,#b0582a 30%,#a04a20 55%,#20a820 62%,#18a018 100%);"></div><div class="a" style="left:0px;top:0px;width:36px;height:3px;background:#3a2010;"></div><div class="a" style="left:2px;top:2px;width:16px;height:4px;background:#e0b040;border-radius:2px"></div><div class="a" style="left:4px;top:5px;width:22px;height:26px;background:radial-gradient(closest-side,#e8b898 55%,rgba(0,0,0,0) 100%);"></div><div class="a" style="left:8px;top:4px;width:17px;height:7px;background:#1a1010;border-radius:45% 45% 20% 20%"></div><div class="a" style="left:9px;top:14px;width:15px;height:3px;background:#707070;opacity:.6"></div><div class="a" style="left:0px;top:28px;width:34px;height:21px;background:linear-gradient(180deg,#4a4a3a,#2a2a20);border-radius:40% 40% 0 0"></div><div class="a" style="left:6px;top:32px;width:18px;height:8px;background:#202020;opacity:.8"></div><div class="a" style="left:4px;top:41px;width:26px;height:6px;background:#e8f0d8;border-radius:3px"></div><div class="a" style="left:36px;top:4px;width:11px;height:12px;background:#70d070;opacity:.6"></div><div class="a" style="left:34px;top:17px;width:14px;height:4px;background:#f0f020;border-radius:2px"></div><div class="a" style="left:24px;top:18px;width:28px;height:26px;background:radial-gradient(closest-side,#f0e030 55%,rgba(0,0,0,0) 100%);"></div><div class="a" style="left:29px;top:23px;width:18px;height:14px;background:#e02010;border-radius:2px"></div><div class="a" style="left:34px;top:42px;width:12px;height:5px;background:#a0f0a0;opacity:.6"></div></div></div>
<div class="inp" style="left:715px;top:12px;width:120px;height:38px;line-height:39px;font-size:12px;padding-left:19px">视频VIP<svg class="a" style="left:106px;top:16px" width="9" height="6" viewBox="0 0 9 6"><path d="M1 1l3.5 3.5L8 1" stroke="#5a5e8c" stroke-width="1.8" fill="none"/></svg></div>
<div class="btn or" style="left:715px;top:66px;width:57px"><svg width="11" height="10" viewBox="0 0 11 10" style="vertical-align:-1px;margin-right:3px"><path d="M11 0L0 4.5l3 1.3L9 1.5 4 6.3V10l2-2.3 3 1.5z" fill="#fff"/></svg>浏览</div>
<div class="btn pu" style="left:777px;top:66px;width:58px"><svg width="11" height="9" viewBox="0 0 11 9" style="vertical-align:-1px;margin-right:3px"><rect x=".6" y=".6" width="9.8" height="7.8" stroke="#fff" stroke-width="1.2" fill="none"/><path d="M1.5 7.5l2.5-3 2 2 1.5-1.5 2 2.5z" fill="#fff"/><circle cx="7.5" cy="3" r="1" fill="#fff"/></svg>海报</div>
<div class="a" style="left:892px;top:12px;font-size:14px;line-height:20px;color:#5e6288">自营</div>
<div class="a" style="left:892px;top:50px;font-size:14px;line-height:20px;color:#2d8f2d">已通过</div>
<div class="btn cy" style="left:973px;top:12px;width:57px"><svg width="10" height="9" viewBox="0 0 15 14" style="vertical-align:-1px;margin-right:3px"><path d="M9 2H2.5A1.5 1.5 0 0 0 1 3.5v8A1.5 1.5 0 0 0 2.5 13h8a1.5 1.5 0 0 0 1.5-1.5V8" stroke="#fff" stroke-width="2" fill="none"/><path d="M12.2.8l1.9 1.9-6.4 6.4-2.6.7.7-2.6z" fill="#fff"/></svg>编辑</div>
<div class="btn rd" style="left:973px;top:56px;width:56px"><svg width="9" height="9" viewBox="0 0 10 10" style="vertical-align:-1px;margin-right:3px"><circle cx="5" cy="5" r="5" fill="#fff"/><path d="M3.2 3.2l3.6 3.6M6.8 3.2l-3.6 3.6" stroke="#f5433b" stroke-width="1.5"/></svg>删除</div>
</div>
<div class="prow" style="top:502px;background:#f4f5f9">
<div class="a" style="left:12px;top:15px;width:13px;height:13px;border:1px solid #666;border-radius:2px;background:#fff"></div>
<div class="inp" style="left:76px;top:12px;width:49px;height:38px;line-height:38px">0</div>
<div class="ta" style="left:169px;top:12px;width:238px;height:85px">【填手机号极速充值】网易云音<br>乐会员年卡黑胶VIP会员音乐会员<br>1年<svg class="a" style="right:2px;bottom:2px" width="9" height="9" viewBox="0 0 9 9"><path d="M8.5 1.5L1.5 8.5M8.5 5L5 8.5" stroke="#555" stroke-width="1"/></svg></div>
<div class="inp" style="left:431px;top:12px;width:119px;height:38px;line-height:38px">138.00</div>
<div class="inp" style="left:431px;top:66px;width:119px;height:38px;line-height:38px"><div class="a" style="left:15px;top:0;width:87px;overflow:hidden">2020-01-01 0</div></div>
<div class="a" style="left:607px;top:12px;width:50px;height:50px;overflow:hidden"><div class="a" style="left:0;top:0;width:50px;height:50px;filter:blur(.5px)"><div class="a" style="left:0px;top:0px;width:49px;height:49px;background:linear-gradient(180deg,#c8e8ec 0%,#b0dce4 60%,#a8c8d8 100%);"></div><div class="a" style="left:0px;top:0px;width:12px;height:3px;background:#5070a0;opacity:.6"></div><div class="a" style="left:36px;top:0px;width:13px;height:5px;background:#e08070;opacity:.6"></div><div class="a" style="left:5px;top:3px;width:40px;height:38px;background:radial-gradient(closest-side,#151515 80%,rgba(20,20,20,0) 100%);"></div><div class="a" style="left:11px;top:17px;width:10px;height:8px;background:#f0f0f0;"></div><div class="a" style="left:19px;top:17px;width:8px;height:9px;background:#e02020;border-radius:50%"></div><div class="a" style="left:27px;top:17px;width:16px;height:8px;background:#f0f0f0;opacity:.9"></div><div class="a" style="left:22px;top:26px;width:17px;height:10px;background:#e03020;"></div><div class="a" style="left:0px;top:28px;width:12px;height:14px;background:#3a58b0;"></div><div class="a" style="left:12px;top:36px;width:28px;height:6px;background:#8090b0;opacity:.85"></div><div class="a" style="left:38px;top:18px;width:11px;height:24px;background:#d07040;opacity:.5"></div><div class="a" style="left:0px;top:43px;width:49px;height:6px;background:#e02818;"></div></div></div>
<div class="inp" style="left:715px;top:12px;width:120px;height:38px;line-height:39px;font-size:12px;padding-left:19px">视频VIP<svg class="a" style="left:106px;top:16px" width="9" height="6" viewBox="0 0 9 6"><path d="M1 1l3.5 3.5L8 1" stroke="#5a5e8c" stroke-width="1.8" fill="none"/></svg></div>
<div class="btn or" style="left:715px;top:66px;width:57px"><svg width="11" height="10" viewBox="0 0 11 10" style="vertical-align:-1px;margin-right:3px"><path d="M11 0L0 4.5l3 1.3L9 1.5 4 6.3V10l2-2.3 3 1.5z" fill="#fff"/></svg>浏览</div>
<div class="btn pu" style="left:777px;top:66px;width:58px"><svg width="11" height="9" viewBox="0 0 11 9" style="vertical-align:-1px;margin-right:3px"><rect x=".6" y=".6" width="9.8" height="7.8" stroke="#fff" stroke-width="1.2" fill="none"/><path d="M1.5 7.5l2.5-3 2 2 1.5-1.5 2 2.5z" fill="#fff"/><circle cx="7.5" cy="3" r="1" fill="#fff"/></svg>海报</div>
<div class="a" style="left:892px;top:12px;font-size:14px;line-height:20px;color:#5e6288">自营</div>
<div class="a" style="left:892px;top:50px;font-size:14px;line-height:20px;color:#2d8f2d">已通过</div>
<div class="btn cy" style="left:973px;top:12px;width:57px"><svg width="10" height="9" viewBox="0 0 15 14" style="vertical-align:-1px;margin-right:3px"><path d="M9 2H2.5A1.5 1.5 0 0 0 1 3.5v8A1.5 1.5 0 0 0 2.5 13h8a1.5 1.5 0 0 0 1.5-1.5V8" stroke="#fff" stroke-width="2" fill="none"/><path d="M12.2.8l1.9 1.9-6.4 6.4-2.6.7.7-2.6z" fill="#fff"/></svg>编辑</div>
<div class="btn rd" style="left:973px;top:56px;width:56px"><svg width="9" height="9" viewBox="0 0 10 10" style="vertical-align:-1px;margin-right:3px"><circle cx="5" cy="5" r="5" fill="#fff"/><path d="M3.2 3.2l3.6 3.6M6.8 3.2l-3.6 3.6" stroke="#f5433b" stroke-width="1.5"/></svg>删除</div>
</div>
<div class="prow" style="top:634px;background:#fff">
<div class="a" style="left:12px;top:15px;width:13px;height:13px;border:1px solid #666;border-radius:2px;background:#fff"></div>
<div class="inp" style="left:76px;top:12px;width:49px;height:38px;line-height:38px">0</div>
<div class="ta" style="left:169px;top:12px;width:238px;height:85px">【下单再减10%】喜马拉雅FM会<br>员12个月VIP年卡听书自动充值<svg class="a" style="right:2px;bottom:2px" width="9" height="9" viewBox="0 0 9 9"><path d="M8.5 1.5L1.5 8.5M8.5 5L5 8.5" stroke="#555" stroke-width="1"/></svg></div>
<div class="inp" style="left:431px;top:12px;width:119px;height:38px;line-height:38px">108.00</div>
<div class="inp" style="left:431px;top:66px;width:119px;height:38px;line-height:38px"><div class="a" style="left:15px;top:0;width:87px;overflow:hidden">2020-01-01 0</div></div>
<div class="a" style="left:607px;top:12px;width:50px;height:50px;overflow:hidden"><div class="a" style="left:0;top:0;width:50px;height:50px;filter:blur(.5px)"><div class="a" style="left:0px;top:0px;width:49px;height:49px;background:linear-gradient(180deg,#3a1410 0%,#2a0c0a 100%);"></div><div class="a" style="left:7px;top:11px;width:35px;height:20px;background:linear-gradient(135deg,#f0d898,#c8a050);border-radius:2px"></div><div class="a" style="left:31px;top:16px;width:8px;height:9px;background:#3a2a1a;border-radius:40%;opacity:.7"></div><div class="a" style="left:13px;top:17px;width:8px;height:5px;background:#8a6a3a;opacity:.6"></div><div class="a" style="left:2px;top:2px;width:14px;height:4px;background:#8a6a60;opacity:.7"></div><div class="a" style="left:40px;top:0px;width:9px;height:8px;background:#e04030;border-radius:0 0 0 50%"></div><div class="a" style="left:0px;top:36px;width:22px;height:13px;background:linear-gradient(180deg,#ff5030,#e02010);"></div><div class="a" style="left:3px;top:38px;width:14px;height:4px;background:#ffe0c0;opacity:.8"></div><div class="a" style="left:2px;top:43px;width:19px;height:6px;background:#ffffff;opacity:.85;border-radius:1px"></div><div class="a" style="left:22px;top:38px;width:27px;height:11px;background:linear-gradient(90deg,#8040c0,#3060d0);"></div><div class="a" style="left:24px;top:41px;width:22px;height:4px;background:#e0d0ff;opacity:.8"></div></div></div>
<div class="inp" style="left:715px;top:12px;width:120px;height:38px;line-height:39px;font-size:12px;padding-left:19px">视频VIP<svg class="a" style="left:106px;top:16px" width="9" height="6" viewBox="0 0 9 6"><path d="M1 1l3.5 3.5L8 1" stroke="#5a5e8c" stroke-width="1.8" fill="none"/></svg></div>
<div class="btn or" style="left:715px;top:66px;width:57px"><svg width="11" height="10" viewBox="0 0 11 10" style="vertical-align:-1px;margin-right:3px"><path d="M11 0L0 4.5l3 1.3L9 1.5 4 6.3V10l2-2.3 3 1.5z" fill="#fff"/></svg>浏览</div>
<div class="btn pu" style="left:777px;top:66px;width:58px"><svg width="11" height="9" viewBox="0 0 11 9" style="vertical-align:-1px;margin-right:3px"><rect x=".6" y=".6" width="9.8" height="7.8" stroke="#fff" stroke-width="1.2" fill="none"/><path d="M1.5 7.5l2.5-3 2 2 1.5-1.5 2 2.5z" fill="#fff"/><circle cx="7.5" cy="3" r="1" fill="#fff"/></svg>海报</div>
<div class="a" style="left:892px;top:12px;font-size:14px;line-height:20px;color:#5e6288">自营</div>
<div class="a" style="left:892px;top:50px;font-size:14px;line-height:20px;color:#2d8f2d">已通过</div>
<div class="btn cy" style="left:973px;top:12px;width:57px"><svg width="10" height="9" viewBox="0 0 15 14" style="vertical-align:-1px;margin-right:3px"><path d="M9 2H2.5A1.5 1.5 0 0 0 1 3.5v8A1.5 1.5 0 0 0 2.5 13h8a1.5 1.5 0 0 0 1.5-1.5V8" stroke="#fff" stroke-width="2" fill="none"/><path d="M12.2.8l1.9 1.9-6.4 6.4-2.6.7.7-2.6z" fill="#fff"/></svg>编辑</div>
<div class="btn rd" style="left:973px;top:56px;width:56px"><svg width="9" height="9" viewBox="0 0 10 10" style="vertical-align:-1px;margin-right:3px"><circle cx="5" cy="5" r="5" fill="#fff"/><path d="M3.2 3.2l3.6 3.6M6.8 3.2l-3.6 3.6" stroke="#f5433b" stroke-width="1.5"/></svg>删除</div>
</div>
<div class="prow" style="top:766px;background:#f4f5f9">
<div class="a" style="left:12px;top:15px;width:13px;height:13px;border:1px solid #666;border-radius:2px;background:#fff"></div>
<div class="inp" style="left:76px;top:12px;width:49px;height:38px;line-height:38px">0</div>
<div class="ta" style="left:169px;top:12px;width:238px;height:85px"><svg class="a" style="right:2px;bottom:2px" width="9" height="9" viewBox="0 0 9 9"><path d="M8.5 1.5L1.5 8.5M8.5 5L5 8.5" stroke="#555" stroke-width="1"/></svg></div>
<div class="inp" style="left:431px;top:12px;width:119px;height:38px;line-height:38px"></div>
<div class="inp" style="left:431px;top:66px;width:119px;height:38px;line-height:38px"><div class="a" style="left:15px;top:0;width:87px;overflow:hidden">2020-01-01 0</div></div>
<div class="a" style="left:607px;top:12px;width:50px;height:50px;overflow:hidden"><div class="a" style="left:0;top:0;width:50px;height:50px;filter:blur(.5px)"><div class="a" style="left:0px;top:0px;width:49px;height:49px;background:linear-gradient(180deg,#d0d0d0 0%,#a0a8b0 100%);"></div><div class="a" style="left:0px;top:0px;width:34px;height:4px;background:#303030;"></div><div class="a" style="left:34px;top:0px;width:15px;height:49px;background:#3a80d0;"></div></div></div>
<div class="inp" style="left:715px;top:12px;width:120px;height:38px;line-height:39px;font-size:12px;padding-left:19px">视频VIP<svg class="a" style="left:106px;top:16px" width="9" height="6" viewBox="0 0 9 6"><path d="M1 1l3.5 3.5L8 1" stroke="#5a5e8c" stroke-width="1.8" fill="none"/></svg></div>
<div class="btn or" style="left:715px;top:66px;width:57px"><svg width="11" height="10" viewBox="0 0 11 10" style="vertical-align:-1px;margin-right:3px"><path d="M11 0L0 4.5l3 1.3L9 1.5 4 6.3V10l2-2.3 3 1.5z" fill="#fff"/></svg>浏览</div>
<div class="btn pu" style="left:777px;top:66px;width:58px"><svg width="11" height="9" viewBox="0 0 11 9" style="vertical-align:-1px;margin-right:3px"><rect x=".6" y=".6" width="9.8" height="7.8" stroke="#fff" stroke-width="1.2" fill="none"/><path d="M1.5 7.5l2.5-3 2 2 1.5-1.5 2 2.5z" fill="#fff"/><circle cx="7.5" cy="3" r="1" fill="#fff"/></svg>海报</div>
<div class="a" style="left:892px;top:12px;font-size:14px;line-height:20px;color:#5e6288">自营</div>
<div class="a" style="left:892px;top:50px;font-size:14px;line-height:20px;color:#2d8f2d">已通过</div>
<div class="btn cy" style="left:973px;top:12px;width:57px"><svg width="10" height="9" viewBox="0 0 15 14" style="vertical-align:-1px;margin-right:3px"><path d="M9 2H2.5A1.5 1.5 0 0 0 1 3.5v8A1.5 1.5 0 0 0 2.5 13h8a1.5 1.5 0 0 0 1.5-1.5V8" stroke="#fff" stroke-width="2" fill="none"/><path d="M12.2.8l1.9 1.9-6.4 6.4-2.6.7.7-2.6z" fill="#fff"/></svg>编辑</div>
<div class="btn rd" style="left:973px;top:56px;width:56px"><svg width="9" height="9" viewBox="0 0 10 10" style="vertical-align:-1px;margin-right:3px"><circle cx="5" cy="5" r="5" fill="#fff"/><path d="M3.2 3.2l3.6 3.6M6.8 3.2l-3.6 3.6" stroke="#f5433b" stroke-width="1.5"/></svg>删除</div>
</div>
</div>
</body></html>
